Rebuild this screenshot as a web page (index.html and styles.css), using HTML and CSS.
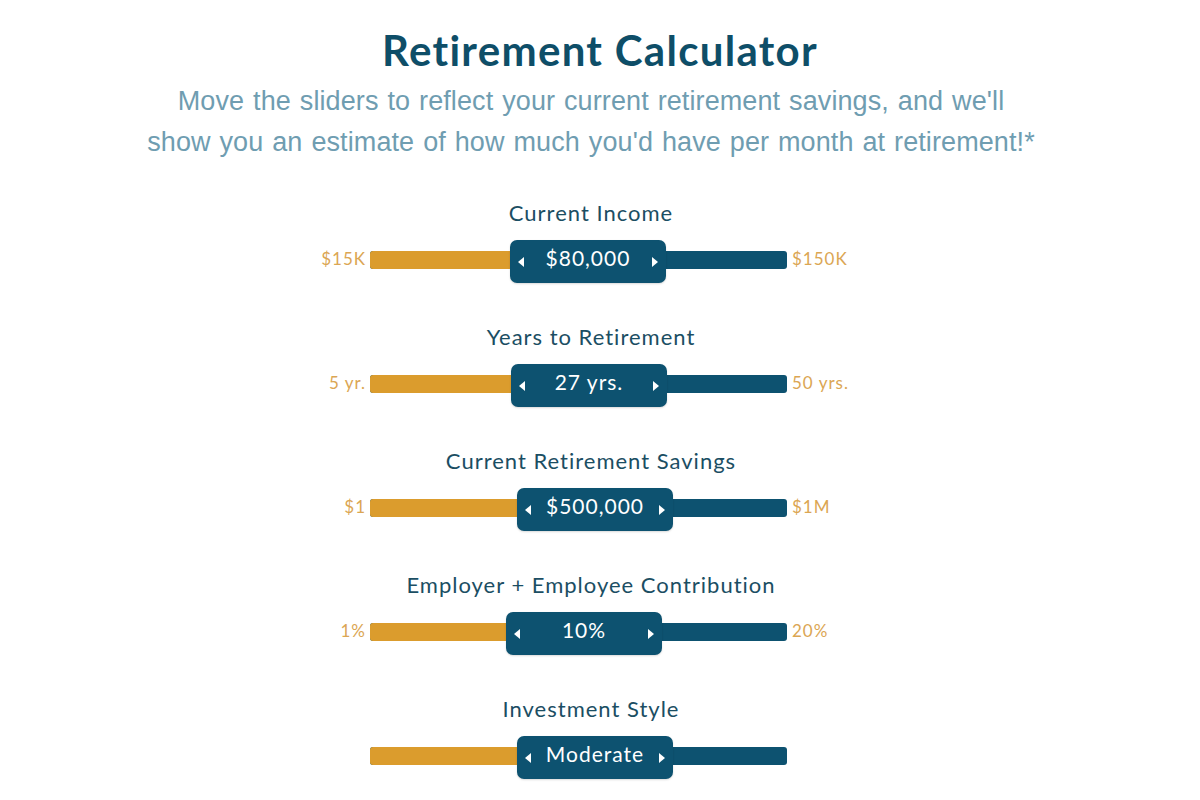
FILE: index.html
```html
<!DOCTYPE html>
<html lang="en">
<head>
<meta charset="utf-8">
<title>Retirement Calculator</title>
<link rel="stylesheet" href="styles.css">
</head>
<body>
<main class="calc">
  <header class="intro">
    <h1 class="title">Retirement Calculator</h1>
    <p class="subtitle">Move the sliders to reflect your current retirement savings, and we'll<br>show you an estimate of how much you'd have per month at retirement!*</p>
  </header>

  <section class="field">
    <div class="field-label">Current Income</div>
    <div class="slider">
      <span class="bound bound-min">$15K</span>
      <div class="track">
        <div class="fill" style="width:180px"></div>
        <div class="handle" style="left:140px"><span class="arrow arrow-left"></span><span class="value">$80,000</span><span class="arrow arrow-right"></span></div>
      </div>
      <span class="bound bound-max">$150K</span>
    </div>
  </section>

  <section class="field">
    <div class="field-label">Years to Retirement</div>
    <div class="slider">
      <span class="bound bound-min">5 yr.</span>
      <div class="track">
        <div class="fill" style="width:180px"></div>
        <div class="handle" style="left:141px"><span class="arrow arrow-left"></span><span class="value">27 yrs.</span><span class="arrow arrow-right"></span></div>
      </div>
      <span class="bound bound-max">50 yrs.</span>
    </div>
  </section>

  <section class="field">
    <div class="field-label">Current Retirement Savings</div>
    <div class="slider">
      <span class="bound bound-min">$1</span>
      <div class="track">
        <div class="fill" style="width:186px"></div>
        <div class="handle" style="left:147px"><span class="arrow arrow-left"></span><span class="value">$500,000</span><span class="arrow arrow-right"></span></div>
      </div>
      <span class="bound bound-max">$1M</span>
    </div>
  </section>

  <section class="field">
    <div class="field-label">Employer + Employee Contribution</div>
    <div class="slider">
      <span class="bound bound-min">1%</span>
      <div class="track">
        <div class="fill" style="width:176px"></div>
        <div class="handle" style="left:136px"><span class="arrow arrow-left"></span><span class="value">10%</span><span class="arrow arrow-right"></span></div>
      </div>
      <span class="bound bound-max">20%</span>
    </div>
  </section>

  <section class="field">
    <div class="field-label">Investment Style</div>
    <div class="slider">
      <span class="bound bound-min"></span>
      <div class="track">
        <div class="fill" style="width:186px"></div>
        <div class="handle" style="left:147px"><span class="arrow arrow-left"></span><span class="value">Moderate</span><span class="arrow arrow-right"></span></div>
      </div>
      <span class="bound bound-max"></span>
    </div>
  </section>
</main>
</body>
</html>
```

FILE: styles.css
```css
html, body {
  margin: 0;
  padding: 0;
  background: #ffffff;
}

body {
  font-family: Lato, "Noto Sans", sans-serif;
  width: 1200px;
  height: 800px;
  overflow: hidden;
}

.calc {
  display: flex;
  flex-direction: column;
}

.intro {
  text-align: center;
  padding-top: 27px;
}

.title {
  margin: 0;
  font-family: Lato, sans-serif;
  font-weight: 700;
  font-size: 42px;
  line-height: 46px;
  color: #0e4e68;
  letter-spacing: 1.3px;
}

.subtitle {
  margin: 8px 0 0;
  padding-right: 18px;
  font-family: "Liberation Sans", Arial, sans-serif;
  font-size: 27px;
  line-height: 41px;
  color: #6f9db1;
  letter-spacing: 0.1px;
  word-spacing: 1.3px;
}

.field {
  margin-top: 36px;
  display: flex;
  flex-direction: column;
}

.field + .field {
  margin-top: 40px;
}

.field-label {
  text-align: center;
  padding-right: 18px;
  font-size: 22px;
  line-height: 28px;
  color: #1b4e63;
  letter-spacing: 1px;
}

.slider {
  margin-top: 13px;
  display: grid;
  grid-template-columns: 1fr 417px 1fr;
  column-gap: 4px;
  align-items: start;
  padding-right: 43px;
  height: 43px;
}

.bound {
  margin-top: 8px;
  font-size: 17px;
  line-height: 22px;
  color: #dba653;
  letter-spacing: 1px;
}

.bound-min {
  text-align: right;
}

.bound-max {
  text-align: left;
  padding-left: 1px;
}

.track {
  position: relative;
  margin-top: 11px;
  height: 18px;
  border-radius: 3px;
  background: #0d5270;
}

.fill {
  height: 100%;
  border-radius: 3px 0 0 3px;
  background: #db9c2d;
}

.handle {
  position: absolute;
  top: -11px;
  width: 156px;
  height: 43px;
  box-sizing: border-box;
  border-radius: 7px;
  background: #0d5270;
  display: flex;
  align-items: center;
  justify-content: space-between;
  padding: 0 8px 0 8px;
  box-shadow: 0 1px 2px rgba(0, 0, 0, 0.15);
}

.value {
  flex: 1;
  text-align: center;
  color: #ffffff;
  font-size: 21px;
  line-height: 26px;
  margin-top: -8px;
  letter-spacing: 1px;
}

.arrow {
  width: 0;
  height: 0;
  border-top: 5px solid transparent;
  border-bottom: 5px solid transparent;
}

.arrow-left {
  border-right: 6px solid #ffffff;
}

.arrow-right {
  border-left: 6px solid #ffffff;
}
```
